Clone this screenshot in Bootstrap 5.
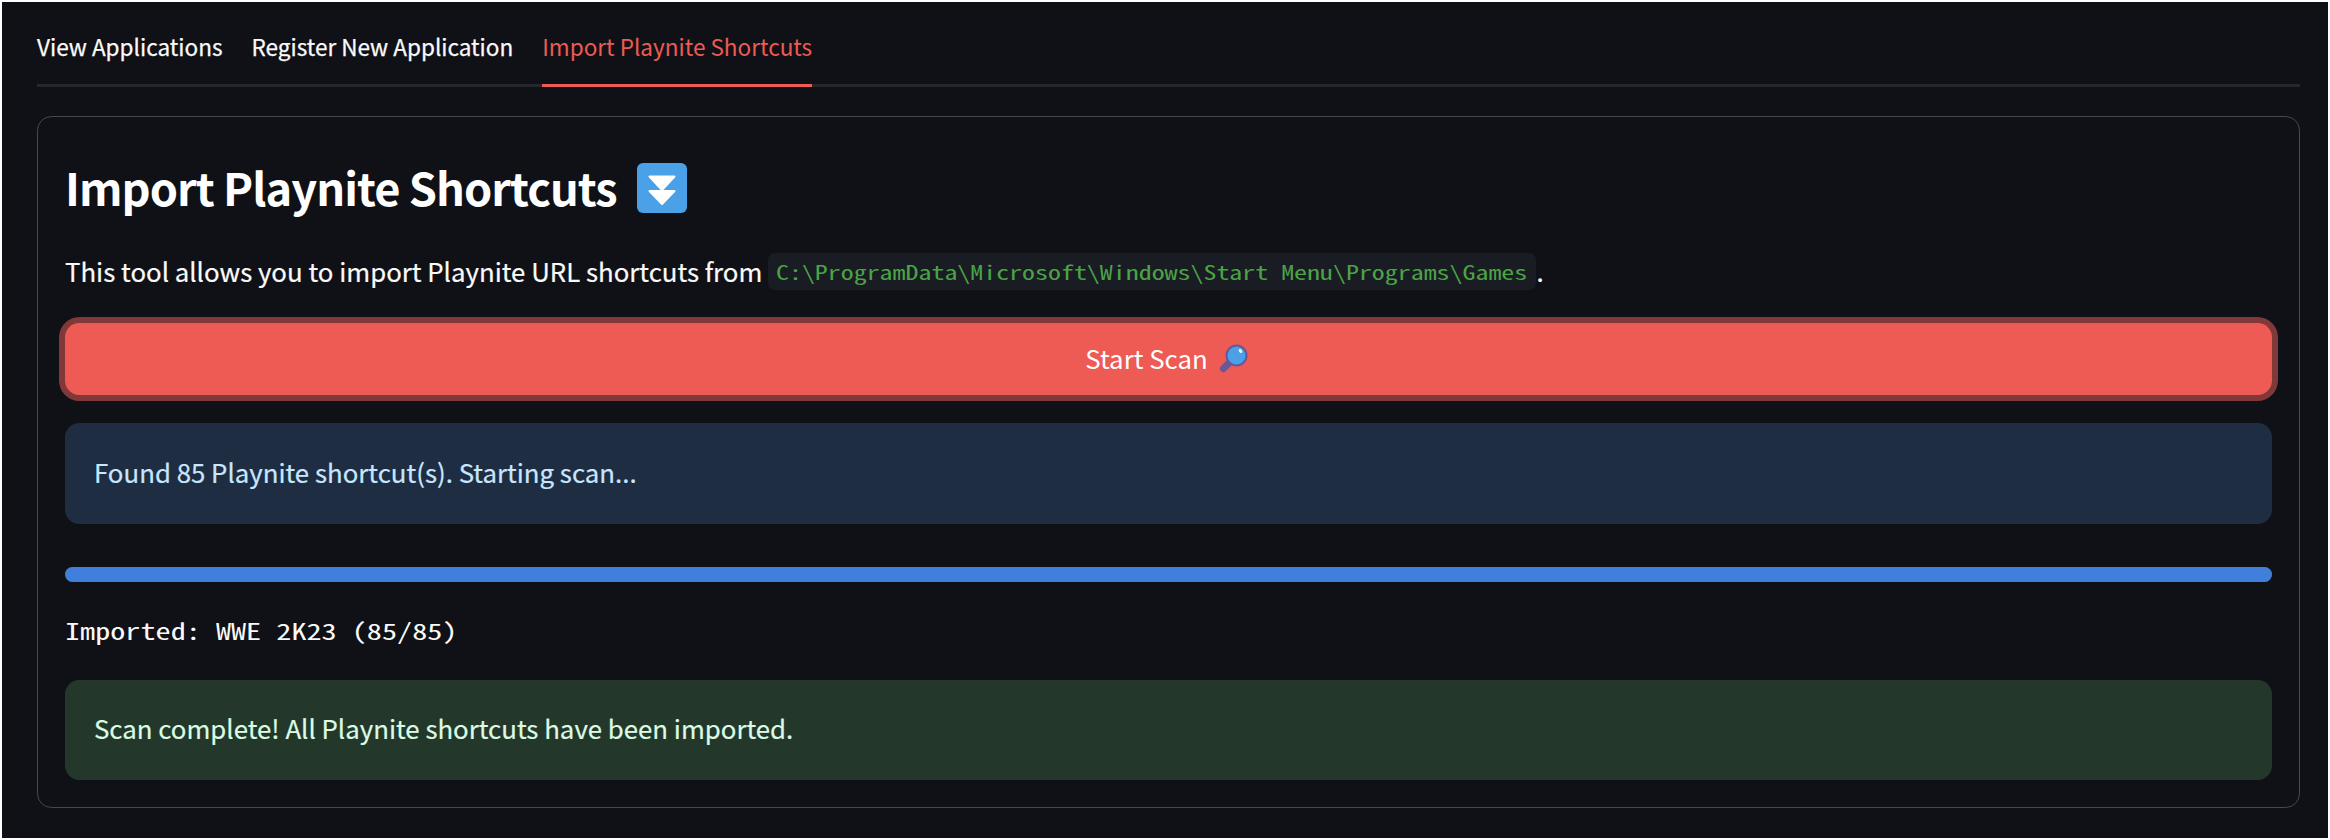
<!DOCTYPE html>
<html lang="en" data-bs-theme="dark">
<head>
<meta charset="utf-8">
<title>Import Playnite Shortcuts</title>
<link href="https://cdn.jsdelivr.net/npm/bootstrap@5.3.0/dist/css/bootstrap.min.css" rel="stylesheet">
<style>
  body { font-family: "Noto Sans CJK SC", "Open Sans", sans-serif; background: #101116; color: #fafafa; font-size: 25.8px; line-height: 46px; }
  .page-frame { height: 840px; border: 2px solid #fff; padding: 0 28px 0 35px; }
  .tab-row { height: 85px; border-bottom: 3px solid #26272c; gap: 29px; }
  .tab-row .nav-link { padding: 0; height: 85px; line-height: 88px; font-size: 22.55px; color: #fafafa; border-bottom: 3px solid transparent; white-space: nowrap; -webkit-text-stroke: .25px; }
  .tab-row .nav-link.active { color: #ee5b54; border-bottom-color: #ee5b54; -webkit-text-stroke: 0; }
  .panel { margin-top: 29px; height: 692px; border: 1px solid #48494e; border-radius: 14.4px; padding: 0 27px; }
  .panel h2 { font-size: 45.2px; font-weight: 600; line-height: 60px; margin: 41px 0 0; height: 60px; }
  .title-text { letter-spacing: -.97px; margin-top: -2px; }
  .intro { margin: 30px 0 0; height: 46px; white-space: nowrap; -webkit-text-stroke: .2px; }
  .intro-text { margin-top: -1px; }
  .path-code { font-family: "Noto Sans Mono CJK SC", "Liberation Mono", monospace; font-size: 19.4px; width: 768px; color: #4aa446; background: #1a1c23; border-radius: 7px; padding: 0 8px; height: 37px; line-height: 38px; margin-left: 6px; -webkit-text-stroke: 0; }
  .wide-mono { display: inline-block; transform: scaleX(1.336); transform-origin: 0 50%; }
  .scan-btn { height: 72px; margin-top: 29px; border-radius: 14.4px; background: #ee5b54; color: #fff; font-size: 25.8px; box-shadow: 0 0 0 6px #813839; border: 0; }
  .btn-text { margin-top: -2px; }
  .note { border: 0; border-radius: 14.4px; padding: 0 29px 4px; margin: 0; -webkit-text-stroke: .2px; }
  .note-info { height: 101px; margin-top: 28px; background: #1f2d42; color: #c7e6ff; }
  .note-done { height: 100px; margin-top: 29px; background: #23382b; color: #dcfbe4; }
  .scan-progress { height: 15px; margin-top: 43px; border-radius: 7.5px; --bs-progress-bar-bg: #4080dc; }
  .status { font-family: "Noto Sans Mono CJK SC", "Liberation Mono", monospace; font-size: 22.6px; line-height: 40px; margin-top: 29px; height: 40px; white-space: pre; }
</style>
</head>
<body>
<main class="page-frame">
  <nav class="nav tab-row flex-nowrap">
    <a class="nav-link" href="#">View Applications</a>
    <a class="nav-link" href="#">Register New Application</a>
    <a class="nav-link active" href="#">Import Playnite Shortcuts</a>
  </nav>
  <section class="panel d-flex flex-column">
    <h2 class="d-flex align-items-center"><span class="title-text">Import Playnite Shortcuts</span>
      <svg class="ms-3" width="54" height="50" viewBox="-4 0 54 50" aria-hidden="true"><rect width="50" height="50" rx="6" fill="#4aa1e8"/><path fill="#fff" stroke="#fff" stroke-width="2" stroke-linejoin="round" d="M12.500 13.500h25L25 27ZM12.500 28h25L25 41Z"/></svg>
    </h2>
    <p class="intro d-flex align-items-center"><span class="intro-text">This tool allows you to import Playnite URL shortcuts from</span><code class="path-code"><span class="wide-mono">C:\ProgramData\Microsoft\Windows\Start Menu\Programs\Games</span></code><span class="intro-text">.</span></p>
    <button type="button" class="btn scan-btn w-100 d-flex align-items-center justify-content-center flex-shrink-0 p-0"><span class="btn-text">Start Scan</span>
      <svg width="44" height="30" viewBox="-10 0 44 30" aria-hidden="true"><path d="M5.500 24.500L11 19" stroke="#66589a" stroke-width="7" stroke-linecap="round"/><circle cx="18.500" cy="11.500" r="10" fill="#4aa1e8" stroke="#66589a" stroke-width="2"/><ellipse cx="22.500" cy="7" rx="1.500" ry="2.200" transform="rotate(-35 22.500 7)" fill="#fff"/></svg>
    </button>
    <div class="alert note note-info d-flex align-items-center flex-shrink-0" role="alert"><span>Found 85 Playnite shortcut(s). Starting scan...</span></div>
    <div class="progress scan-progress flex-shrink-0"><div class="progress-bar w-100"></div></div>
    <div class="status"><span class="wide-mono">Imported: WWE 2K23 (85/85)</span></div>
    <div class="alert note note-done d-flex align-items-center flex-shrink-0" role="alert"><span>Scan complete! All Playnite shortcuts have been imported.</span></div>
  </section>
</main>
<script src="https://cdn.jsdelivr.net/npm/bootstrap@5.3.0/dist/js/bootstrap.bundle.min.js"></script>
</body>
</html>
